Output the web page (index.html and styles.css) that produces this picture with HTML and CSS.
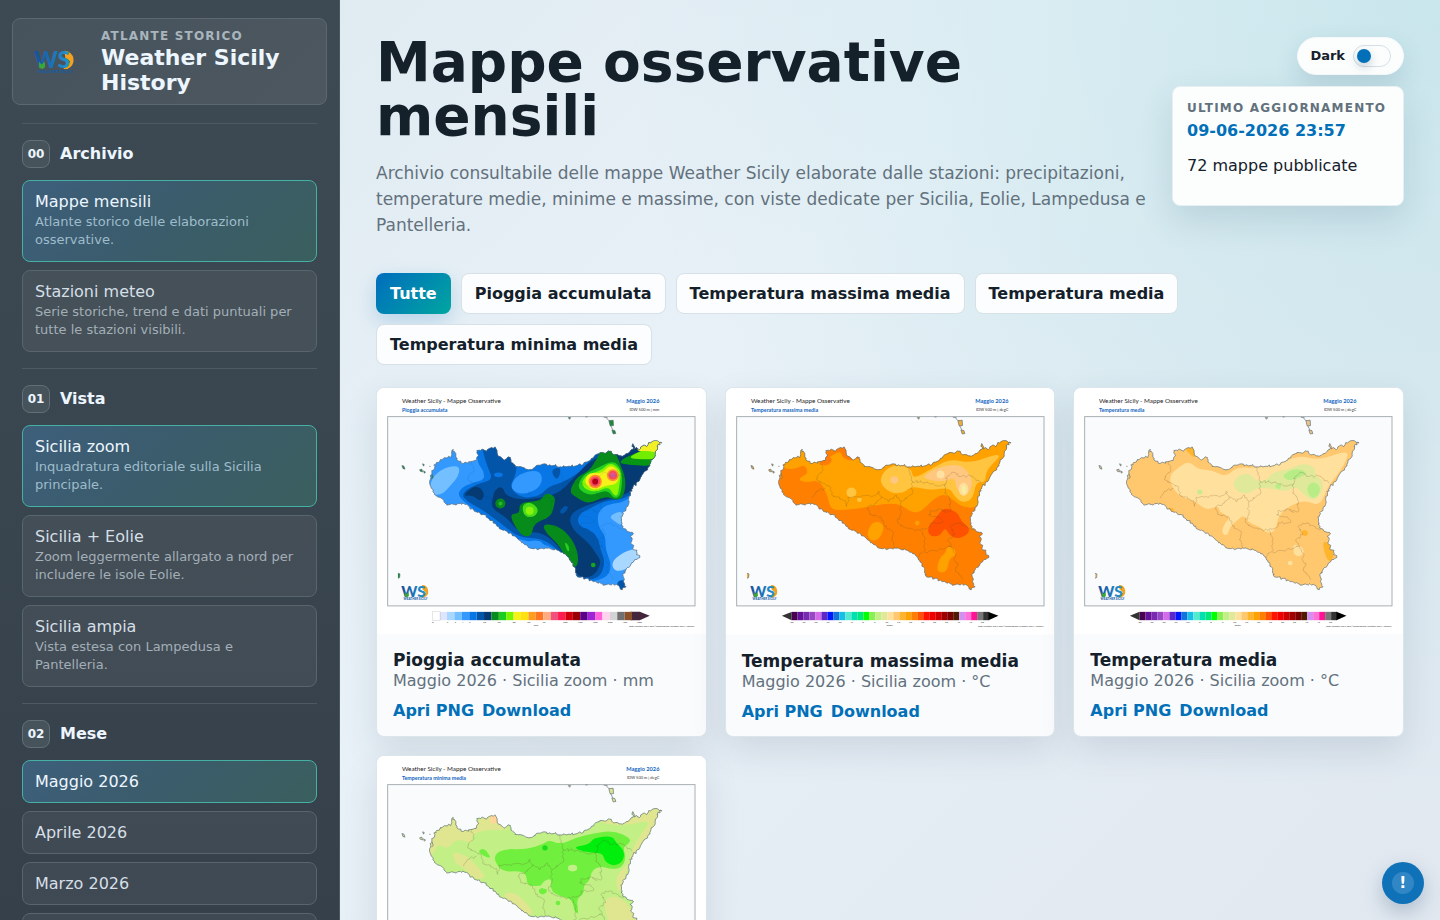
FILE: index.html
```
<!DOCTYPE html>
<html lang="it">
<head>
    <meta charset="UTF-8">
    <meta name="viewport" content="width=device-width, initial-scale=1.0">
    <title>Mappe osservative mensili | Weather Sicily History</title>
    <link rel="stylesheet" href="styles.css">
</head>
<body>
    <!-- Forme condivise dalle mappe -->
    <svg class="shared-defs" width="0" height="0" aria-hidden="true">
        <defs>
            <linearGradient id="ws-blue" x1="0" y1="0" x2="1" y2="0">
                <stop offset="0" stop-color="#164f9c"/>
                <stop offset="1" stop-color="#2196d3"/>
            </linearGradient>
            <path id="coast" d="M232 208 L240 225 L243 240 L262 251 L285 245 L302 237 L307 225 L303 212 L318 208 L332 214 L343 205 L357 201 L364 212 L368 229 L385 241 L397 231 L404 236 L406 247 L425 260 L450 268 L478 264 L500 253 L520 256 L540 254 L555 261 L580 259 L605 257 L625 249 L645 241 L660 225 L680 218 L702 214 L716 225 L740 229 L760 219 L773 208 L772 191 L776 207 L795 206 L818 194 L836 182 L848 184 L860 189 L848 193 L846 208 L835 235 L820 260 L800 285 L782 310 L768 328 L760 350 L757 380 L742 398 L738 425 L741 445 L755 455 L765 458 L774 463 L764 470 L770 480 L765 490 L775 497 L772 508 L785 512 L783 525 L793 534 L778 540 L768 550 L752 568 L743 590 L744 605 L752 622 L740 631 L730 618 L712 612 L690 616 L668 611 L640 600 L606 592 L600 572 L592 552 L575 530 L550 513 L520 505 L490 508 L465 506 L447 495 L428 480 L405 460 L378 450 L352 430 L325 405 L300 396 L285 388 L272 374 L245 372 L213 376 L200 358 L178 346 L166 325 L163 300 L168 275 L180 250 L200 238 L226 228 Z"/>
            <clipPath id="land"><use href="#coast"/></clipPath>
            <path id="provinces" d="M288 245 L295 270 L280 285 L275 300 L300 312 L318 325 L320 345 L345 358 L362 362 L366 380 L370 352 L395 352 L420 348 L440 352 L460 335 L470 352 L490 365 L515 345 L530 365 L560 345 L562 310 L557 280 L545 258 M302 325 L275 335 L263 355 M530 365 L525 410 L520 430 L545 445 L585 452 L610 445 L625 430 L655 425 L645 412 L612 405 L620 392 L650 390 L665 400 M470 352 L455 370 L430 380 L435 405 L470 415 L480 440 L505 455 L500 480 L508 505 M562 305 L600 308 L640 318 L662 312 L668 290 L690 278 L710 290 L745 290 L770 310 M662 312 L660 340 L675 360 L678 395 L650 390 M590 452 L600 480 L600 515 L578 535 M600 520 L650 508 L680 500 L670 480 L690 465 L676 440 L700 430 L725 440 L745 450 M680 500 L695 525 L688 540 L700 555 L695 575 L715 600"/>
            <path id="islands" d="M78 257 L84 259 L87 268 L81 266 Z M140 252 L145 254 L143 259 Z M131 270 L138 268 L140 276 L134 275 Z M143 273 L149 277 L145 280 Z M160 259 L164 260 M168 282 L172 292 L167 298 M578 113 L585 113 L582 118 Z M630 111 L636 111 M685 112 L696 113 M693 114 L700 122 M700 122 L713 121 L714 137 L704 138 Z M706 138 L712 150 M709 150 L718 152 L721 161 L713 162 Z M66 581 L72 583 L71 594 L66 596"/>
            <g id="ws-logo">
                <path d="M138 616 A19 19 0 0 1 144 653 L136 653 L150 638 L140 630 Z" fill="#f5a01f"/>
                <text class="ws-letters" x="76" y="651" fill="url(#ws-blue)">WS</text>
                <path d="M86 638 L92 644 L98 637 L99 649 L94 653 L87 651 Z" fill="#39a935"/>
                <text class="ws-name" x="83" y="661">WEATHER SICILY</text>
            </g>
            <g id="sheet">
                <rect x="3" y="24" width="988" height="741" fill="#fff"/>
                <rect x="35" y="110" width="924" height="569" fill="#fafbfd" stroke="#a8b0b4" stroke-width="3"/>
                <text class="map-head" x="78" y="68">Weather Sicily - Mappe Osservative</text>
                <text class="map-month" x="852" y="68">Maggio 2026</text>
                <text class="map-source" x="957" y="741">Dati: Weather Sicily IDW | Elaborazione: Weather Sicily Network</text>
                <use href="#ws-logo"/>
            </g>
            <g id="temp-ticks" class="ticks">
                <text x="200" y="731">-30</text><text x="236" y="731">-25</text><text x="272" y="731">-20</text><text x="308" y="731">-15</text><text x="344" y="731">-10</text><text x="380" y="731">-5</text><text x="415" y="731">0</text><text x="450" y="731">5</text><text x="486" y="731">10</text><text x="522" y="731">15</text><text x="558" y="731">20</text><text x="594" y="731">25</text><text x="630" y="731">30</text><text x="666" y="731">35</text><text x="702" y="731">40</text><text x="738" y="731">45</text><text x="774" y="731">50</text><text x="495" y="740">degC</text>
            </g>
        </defs>
    </svg>

    <div class="app">
        <aside class="sidebar">
            <div class="brand">
                <svg class="brand-logo" viewBox="66 600 106 76" role="img" aria-label="Weather Sicily"><use href="#ws-logo"/></svg>
                <div>
                    <span class="eyebrow">Atlante storico</span>
                    <strong class="brand-name">Weather Sicily History</strong>
                </div>
            </div>

            <section class="side-section">
                <h2><span class="step">00</span>Archivio</h2>
                <nav class="side-list">
                    <a class="side-item active" href="#mappe">Mappe mensili<small>Atlante storico delle elaborazioni osservative.</small></a>
                    <a class="side-item" href="#stazioni">Stazioni meteo<small>Serie storiche, trend e dati puntuali per tutte le stazioni visibili.</small></a>
                </nav>
            </section>

            <section class="side-section">
                <h2><span class="step">01</span>Vista</h2>
                <div class="side-list">
                    <button class="side-item active" type="button">Sicilia zoom<small>Inquadratura editoriale sulla Sicilia principale.</small></button>
                    <button class="side-item" type="button">Sicilia + Eolie<small>Zoom leggermente allargato a nord per includere le isole Eolie.</small></button>
                    <button class="side-item" type="button">Sicilia ampia<small>Vista estesa con Lampedusa e Pantelleria.</small></button>
                </div>
            </section>

            <section class="side-section">
                <h2><span class="step">02</span>Mese</h2>
                <div class="side-list">
                    <button class="side-item active" type="button">Maggio 2026</button>
                    <button class="side-item" type="button">Aprile 2026</button>
                    <button class="side-item" type="button">Marzo 2026</button>
                    <button class="side-item" type="button">Febbraio 2026</button>
                </div>
            </section>
        </aside>

        <main class="content" id="mappe">
            <header class="page-header">
                <div>
                    <h1>Mappe osservative mensili</h1>
                    <p class="intro">Archivio consultabile delle mappe Weather Sicily elaborate dalle stazioni: precipitazioni, temperature medie, minime e massime, con viste dedicate per Sicilia, Eolie, Lampedusa e Pantelleria.</p>
                </div>
                <div class="header-side">
                    <label class="theme-toggle" for="theme">Dark
                        <input type="checkbox" id="theme">
                    </label>
                    <div class="status">
                        <span class="eyebrow">Ultimo aggiornamento</span>
                        <strong>09-06-2026 23:57</strong>
                        <p>72 mappe pubblicate</p>
                    </div>
                </div>
            </header>

            <div class="filters">
                <button class="active" type="button">Tutte</button>
                <button type="button">Pioggia accumulata</button>
                <button type="button">Temperatura massima media</button>
                <button type="button">Temperatura media</button>
                <button type="button">Temperatura minima media</button>
            </div>

            <div class="map-grid">
                <!-- Pioggia accumulata -->
                <article class="map-card">
                    <svg class="map" viewBox="3 24 988 741" role="img" aria-label="Pioggia accumulata, Maggio 2026">
                        <use href="#sheet"/>
                        <text class="map-kind" x="78" y="97">Pioggia accumulata</text>
                        <text class="map-unit" x="852" y="93">IDW 500 m | mm</text>
                        <g class="zones" clip-path="url(#land)">
                            <rect x="150" y="170" width="720" height="470" fill="#3399ff"/>
                            <path d="M165 300 L190 272 L225 258 L252 260 L248 290 L225 315 L200 345 L160 345 Z" fill="#73bfff"/>
                            <path d="M300 190 L410 220 L520 245 L670 215 L880 170 L860 260 L760 365 L690 375 L666 400 L668 440 L690 470 L690 510 L710 560 L690 600 L600 610 L560 520 L500 490 L450 485 L400 470 L350 440 L290 385 L245 350 L255 325 L290 308 L325 300 L325 275 L305 250 Z" fill="#0877e5"/>
                            <path d="M315 180 L410 220 L425 260 L416 295 L402 320 L432 355 L490 350 L520 320 L555 310 L610 280 L640 245 L670 215 L880 170 L860 260 L758 358 L690 362 L645 385 L605 405 L620 440 L665 465 L675 510 L690 550 L670 600 L600 600 L560 520 L500 475 L430 475 L375 430 L320 390 L262 358 L262 335 L310 310 L352 300 L335 260 L325 230 Z" fill="#0355aa"/>
                            <path d="M357 330 L380 318 L390 350 L450 362 L545 345 L590 300 L660 225 L880 170 L860 260 L758 345 L680 362 L610 385 L580 410 L590 450 L640 490 L660 520 L680 550 L650 595 L600 590 L560 510 L500 455 L430 460 L395 415 L345 385 L352 350 Z M260 350 L300 313 L328 340 L315 368 L290 345 Z" fill="#053a73"/>
                            <path d="M412 300 L440 278 L490 270 L502 300 L485 330 L440 345 L405 330 Z" fill="#3399ff"/>
                            <path d="M525 270 L555 260 L552 290 L540 300 Z" fill="#0355aa"/>
                            <ellipse cx="368" cy="285" rx="13" ry="7" fill="#0877e5"/>
                            <path d="M550 395 L570 375 L580 385 L560 405 Z" fill="#0355aa"/>
                            <path d="M603 410 L650 395 L672 425 L640 450 L612 440 Z" fill="#0877e5"/>
                            <path d="M450 488 L480 480 L505 490 L495 515 L450 510 Z" fill="#3399ff"/>
                            <path d="M700 408 L745 390 L745 440 L715 425 Z" fill="#73bfff"/>
                            <path d="M705 545 L760 508 L810 510 L775 560 L720 580 Z" fill="#a8d7ff"/>
                            <path d="M580 335 L605 290 L640 275 L665 235 L680 205 L715 205 L735 255 L752 300 L745 352 L720 362 L690 348 L640 374 L600 352 Z" fill="#078c1b"/>
                            <path d="M603 325 L622 285 L665 265 L715 240 L742 275 L736 350 L715 357 L695 328 L645 350 Z" fill="#26cf20"/>
                            <path d="M614 318 L632 283 L675 274 L705 246 L738 272 L732 312 L727 350 L712 345 L700 320 L655 340 Z" fill="#8df500"/>
                            <path d="M624 308 L640 278 L680 282 L705 252 L735 280 L723 315 L690 316 L655 335 Z" fill="#f6f01b"/>
                            <circle cx="659" cy="305" r="20" fill="#ff8b28"/>
                            <circle cx="659" cy="305" r="15" fill="#ff4a62"/>
                            <circle cx="659" cy="305" r="9" fill="#ba0018"/>
                            <circle cx="712" cy="286" r="18" fill="#ff952c"/>
                            <circle cx="712" cy="286" r="13" fill="#f44e5a"/>
                            <circle cx="712" cy="286" r="7" fill="#d957a0"/>
                            <path d="M725 248 L775 220 L880 190 L850 260 L760 256 Z" fill="#079515"/>
                            <path d="M755 235 L800 210 L860 190 L845 238 L800 238 Z" fill="#72ec00"/>
                            <path d="M775 215 L820 165 L890 175 L855 222 L820 212 Z" fill="#f3ef25"/>
                            <circle cx="374" cy="371" r="15" fill="#078c1b"/>
                            <circle cx="374" cy="371" r="6" fill="#2cb52a"/>
                            <path d="M404 402 L432 402 L430 368 L495 364 L510 338 L540 350 L535 380 L525 412 L475 430 L467 470 L440 470 L412 430 Z" fill="#078c1b"/>
                            <path d="M438 375 L465 366 L490 388 L478 412 L446 412 Z" fill="#48dd19"/>
                            <circle cx="462" cy="393" r="12" fill="#8af20c"/>
                            <path d="M498 432 L550 438 L592 480 L610 530 L602 570 L575 540 L545 490 L515 465 Z" fill="#078c1b"/>
                            <path d="M566 485 L582 500 L580 518 L572 508 Z" fill="#26cf20"/>
                            <circle cx="653" cy="556" r="7" fill="#16a51d"/>
                            <path d="M725 600 L765 605 L755 645 L725 635 Z" fill="#0355aa"/>
                        </g>
                        <use href="#provinces" class="provinces faint"/>
                        <use href="#coast" class="coast"/>
                        <use href="#islands" class="coast" fill="#168b38"/>
                        <path d="M765 697 H793 L823 709 L793 722 H765 Z" fill="#43253c"/>
                        <g class="scale" data-x="169" data-step="22.25" data-colors="#ffffff,#dfe5ff,#a8d7ff,#73bfff,#3399ff,#0877e5,#0355aa,#053a73,#078c1b,#1ecb20,#7af500,#f6f01b,#ffe010,#ff9d20,#ff7524,#ffab80,#f0527c,#ff1d50,#d1000d,#990006,#5c008a,#9c24d4,#ff61d8,#ffd3ee,#d3d3d3,#707070,#8c5028"></g>
                        <rect x="169" y="697" width="24" height="25" fill="none" stroke="#b5b5b5"/>
                        <g class="ticks"><text x="171" y="731">0</text><text x="215" y="731">1</text><text x="238" y="731">2</text><text x="260" y="731">4</text><text x="282" y="731">6</text><text x="326" y="731">10</text><text x="370" y="731">20</text><text x="415" y="731">30</text><text x="459" y="731">50</text><text x="505" y="731">75</text><text x="569" y="731">100</text><text x="614" y="731">150</text><text x="659" y="731">200</text><text x="704" y="731">300</text><text x="748" y="731">400</text><text x="792" y="731">500</text><text x="481" y="740">mm</text></g>
                    </svg>
                    <div class="map-body">
                        <h3>Pioggia accumulata</h3>
                        <p>Maggio 2026 · Sicilia zoom · mm</p>
                        <div class="map-links"><a href="#">Apri PNG</a><a href="#">Download</a></div>
                    </div>
                </article>

                <!-- Temperatura massima media -->
                <article class="map-card">
                    <svg class="map" viewBox="3 24 988 741" role="img" aria-label="Temperatura massima media, Maggio 2026">
                        <use href="#sheet"/>
                        <text class="map-kind" x="78" y="97">Temperatura massima media</text>
                        <text class="map-unit" x="852" y="93">IDW 500 m | degC</text>
                        <g class="zones" clip-path="url(#land)">
                            <rect x="150" y="170" width="720" height="470" fill="#ff8000"/>
                            <path d="M160 262 L235 190 L255 240 L290 245 L310 235 L350 210 L390 245 L640 235 L890 150 L820 290 L765 350 L758 385 L715 382 L685 360 L660 342 L630 355 L610 375 L585 398 L560 398 L530 375 L490 370 L430 382 L370 390 L318 392 L310 350 L285 300 L245 308 L220 300 L235 288 L250 280 L240 252 L210 270 Z" fill="#ffa200"/>
                            <path d="M280 255 L305 220 L325 240 L310 258 Z M340 205 L350 185 L378 210 L395 243 L358 240 Z" fill="#ff7c08"/>
                            <path d="M462 308 L480 270 L520 252 L562 268 L565 300 L640 255 L680 238 L740 250 L815 222 L828 230 L785 270 L782 310 L755 305 L745 358 L715 370 L690 352 L675 322 L620 332 L560 318 L540 338 L500 342 Z" fill="#ffc440"/>
                            <path d="M590 292 L640 262 L705 252 L738 285 L745 320 L722 353 L696 330 L690 292 L660 306 L620 302 Z M492 300 L510 284 L526 302 L508 316 Z" fill="#ffc780"/>
                            <circle cx="648" cy="284" r="12" fill="#ffe0a0"/>
                            <ellipse cx="717" cy="328" rx="14" ry="20" fill="#ffdd9a"/>
                            <ellipse cx="718" cy="329" rx="6" ry="13" fill="#f5f0a0"/>
                            <circle cx="380" cy="338" r="15" fill="#ffc440"/>
                            <circle cx="404" cy="360" r="7" fill="#ffc440"/>
                            <path d="M425 470 L438 432 L460 424 L480 438 L467 475 L445 486 Z M636 565 L648 530 L665 520 L666 498 L692 508 L694 528 L675 535 L667 575 L645 580 Z" fill="#ffa200"/>
                            <circle cx="578" cy="430" r="7" fill="#ffa200"/>
                            <path d="M608 445 L635 412 L660 382 L700 398 L710 425 L736 445 L730 464 L700 478 L675 468 L662 442 L645 470 L615 470 Z" fill="#ff5200"/>
                        </g>
                        <use href="#provinces" class="provinces"/>
                        <use href="#coast" class="coast"/>
                        <use href="#islands" class="coast" fill="#f2ab33"/>
                        <g class="scale" data-x="200" data-step="18" data-palette="temp"></g>
                        <path d="M200 697 L171 709 L200 722 Z" fill="#333"/>
                        <path d="M792 697 L822 709 L792 722 Z" fill="#000"/>
                        <use href="#temp-ticks"/>
                    </svg>
                    <div class="map-body">
                        <h3>Temperatura massima media</h3>
                        <p>Maggio 2026 · Sicilia zoom · °C</p>
                        <div class="map-links"><a href="#">Apri PNG</a><a href="#">Download</a></div>
                    </div>
                </article>

                <!-- Temperatura media -->
                <article class="map-card">
                    <svg class="map" viewBox="3 24 988 741" role="img" aria-label="Temperatura media, Maggio 2026">
                        <use href="#sheet"/>
                        <text class="map-kind" x="78" y="97">Temperatura media</text>
                        <text class="map-unit" x="852" y="93">IDW 500 m | degC</text>
                        <g class="zones" clip-path="url(#land)">
                            <rect x="150" y="170" width="720" height="470" fill="#ffc76e"/>
                            <path d="M286 290 L320 260 L350 244 L375 268 L420 272 L460 292 L490 262 L560 265 L640 245 L680 226 L740 242 L815 214 L830 225 L800 280 L772 310 L755 350 L738 378 L700 362 L665 372 L620 400 L608 455 L585 462 L560 440 L530 430 L515 405 L490 425 L472 440 L464 470 L446 460 L455 430 L475 412 L440 398 L438 378 L400 392 L370 365 L335 355 L305 335 Z" fill="#ffe09c"/>
                            <path d="M478 312 L500 285 L530 280 L550 305 L585 300 L600 278 L650 268 L690 250 L730 262 L725 285 L755 305 L745 345 L720 364 L690 342 L670 318 L640 337 L590 325 L550 325 L530 342 L495 338 Z" fill="#dfe999"/>
                            <path d="M628 290 L650 272 L680 266 L706 280 L680 294 L650 303 Z M700 325 L720 303 L745 320 L738 348 L716 357 Z M602 318 L628 308 L622 332 Z" fill="#b7ec87"/>
                            <circle cx="381" cy="337" r="8" fill="#cce98f"/>
                            <path d="M338 210 L350 190 L372 208 L368 236 L350 222 Z M688 450 L708 454 L704 470 L688 467 Z M750 480 L778 498 L785 530 L770 550 L755 520 Z M281 382 L305 386 L300 402 Z" fill="#ffb52b"/>
                            <circle cx="678" cy="515" r="15" fill="#ffe09c"/>
                            <circle cx="670" cy="503" r="8" fill="#ffe09c"/>
                            <circle cx="653" cy="550" r="7" fill="#ffe09c"/>
                        </g>
                        <use href="#provinces" class="provinces"/>
                        <use href="#coast" class="coast"/>
                        <use href="#islands" class="coast" fill="#eac68a"/>
                        <g class="scale" data-x="200" data-step="18" data-palette="temp"></g>
                        <path d="M200 697 L171 709 L200 722 Z" fill="#333"/>
                        <path d="M792 697 L822 709 L792 722 Z" fill="#000"/>
                        <use href="#temp-ticks"/>
                    </svg>
                    <div class="map-body">
                        <h3>Temperatura media</h3>
                        <p>Maggio 2026 · Sicilia zoom · °C</p>
                        <div class="map-links"><a href="#">Apri PNG</a><a href="#">Download</a></div>
                    </div>
                </article>

                <!-- Temperatura minima media -->
                <article class="map-card">
                    <svg class="map" viewBox="3 24 988 741" role="img" aria-label="Temperatura minima media, Maggio 2026">
                        <use href="#sheet"/>
                        <text class="map-kind" x="78" y="97">Temperatura minima media</text>
                        <text class="map-unit" x="852" y="93">IDW 500 m | degC</text>
                        <g class="zones" clip-path="url(#land)">
                            <rect x="150" y="170" width="720" height="470" fill="#c2ef86"/>
                            <path d="M150 300 L180 240 L235 190 L245 240 L300 225 L350 190 L380 230 L405 247 L330 245 L285 262 L295 288 L240 272 L215 305 L185 285 L160 345 Z M230 310 L270 322 L300 350 L335 392 L290 395 L265 360 L235 345 Z M650 222 L750 235 L830 215 L795 260 L770 305 L760 345 L745 405 L730 440 L718 390 L755 350 L800 285 L880 180 L840 175 L770 205 Z M685 450 L740 445 L800 530 L740 610 L720 580 L690 500 Z M375 440 L415 432 L450 462 L480 505 L420 490 Z" fill="#e0e690"/>
                            <path d="M340 214 L352 196 L370 212 L364 228 L345 226 Z" fill="#ffd59a"/>
                            <path d="M350 328 L380 303 L450 305 L500 290 L520 276 L555 290 L600 270 L660 255 L715 248 L768 272 L758 290 L742 298 L752 330 L738 362 L700 364 L680 355 L650 365 L642 400 L625 410 L624 440 L602 455 L610 500 L596 492 L590 455 L555 445 L528 432 L525 405 L490 415 L454 414 L452 378 L430 370 L378 372 Z M305 310 L325 300 L348 332 L325 326 Z M486 425 L510 416 L516 435 L495 442 Z" fill="#70ef3e"/>
                            <path d="M596 297 L640 290 L655 270 L710 264 L722 285 L748 310 L742 342 L715 356 L688 342 L682 316 L640 314 L608 306 Z" fill="#00ee0c"/>
                            <circle cx="508" cy="300" r="8" fill="#18de1c"/>
                            <ellipse cx="591" cy="361" rx="14" ry="10" fill="#c2ef86"/>
                            <path d="M494 412 L515 392 L530 398 L522 424 L500 424 Z" fill="#c2ef86"/>
                            <circle cx="547" cy="466" r="7" fill="#70ef3e"/>
                        </g>
                        <use href="#provinces" class="provinces"/>
                        <use href="#coast" class="coast"/>
                        <use href="#islands" class="coast" fill="#dce490"/>
                        <g class="scale" data-x="200" data-step="18" data-palette="temp"></g>
                    </svg>
                    <div class="map-body">
                        <h3>Temperatura minima media</h3>
                        <p>Maggio 2026 · Sicilia zoom · °C</p>
                        <div class="map-links"><a href="#">Apri PNG</a><a href="#">Download</a></div>
                    </div>
                </article>
            </div>
        </main>
    </div>

    <button class="report" type="button" aria-label="Segnala un problema"><span>!</span></button>

    <script>
        const tempColors = '#4a0052,#65129a,#782bb0,#9848c4,#d46be8,#5e28c8,#0018ff,#1274da,#17bfe8,#55e9cf,#00e0b0,#00e77d,#00ff00,#8af052,#c2ef86,#dfe999,#ffe09c,#ffc76e,#ffb52b,#ffa200,#ff8000,#ff5200,#ff1200,#f00000,#d00000,#a00000,#7d0000,#4d1b00,#d291f0,#ff70d8,#ff1493,#777777,#333333';

        // Divide un tracciato in liste di punti [x, y]
        function readRings(path) {
            return path.getAttribute('d').split('M').filter(part => part.trim()).map(part => {
                const nums = part.match(/-?\d+/g).map(Number);
                const points = [];
                for (let i = 0; i < nums.length; i += 2) {
                    points.push([nums[i], nums[i + 1]]);
                }
                return { points, closed: part.includes('Z') };
            });
        }

        // Contorni morbidi per le fasce di valore
        document.querySelectorAll('.zones path').forEach(path => {
            const d = readRings(path).map(({ points }) => {
                const mid = (a, b) => [(a[0] + b[0]) / 2, (a[1] + b[1]) / 2];
                const n = points.length;
                let out = 'M' + mid(points[n - 1], points[0]);
                points.forEach((p, i) => {
                    out += ' Q' + p + ' ' + mid(p, points[(i + 1) % n]);
                });
                return out + 'Z';
            });
            path.setAttribute('d', d.join(' '));
        });

        // Linee frastagliate per coste e confini
        function roughen(id, size) {
            const path = document.getElementById(id);
            let seed = 7;
            const noise = () => {
                seed = (seed * 16807) % 2147483647;
                return (seed / 2147483647 - 0.5) * size;
            };
            const d = readRings(path).map(({ points, closed }) => {
                const out = [];
                points.forEach((p, i) => {
                    out.push(p);
                    const next = points[i + 1] || (closed ? points[0] : null);
                    if (!next) return;
                    const steps = Math.round(Math.hypot(next[0] - p[0], next[1] - p[1]) / 5);
                    for (let s = 1; s < steps; s++) {
                        out.push([
                            Math.round(p[0] + (next[0] - p[0]) * s / steps + noise()),
                            Math.round(p[1] + (next[1] - p[1]) * s / steps + noise())
                        ]);
                    }
                });
                return 'M' + out.join(' L') + (closed ? 'Z' : '');
            });
            path.setAttribute('d', d.join(' '));
        }

        roughen('coast', 7);
        roughen('provinces', 8);

        // Disegna le scale dei colori sotto le mappe
        document.querySelectorAll('.scale').forEach(scale => {
            const colors = (scale.dataset.palette === 'temp' ? tempColors : scale.dataset.colors).split(',');
            const step = Number(scale.dataset.step);
            colors.forEach((color, i) => {
                const rect = document.createElementNS('http://www.w3.org/2000/svg', 'rect');
                rect.setAttribute('x', Number(scale.dataset.x) + i * step);
                rect.setAttribute('y', 697);
                rect.setAttribute('width', step);
                rect.setAttribute('height', 25);
                rect.setAttribute('fill', color);
                scale.appendChild(rect);
            });
        });
    </script>
</body>
</html>
```
FILE: styles.css
```
* {
    box-sizing: border-box;
}

html {
    scrollbar-width: none;
}

body {
    margin: 0;
    font-family: "DejaVu Sans", sans-serif;
    font-size: 16px;
    line-height: 20px;
    color: #14202a;
    background:
        radial-gradient(circle at 100% 0, rgba(0, 175, 175, 0.13), transparent 48%),
        linear-gradient(135deg, #dce8ef 0%, #e8f1f7 45%, #e1e8f0 100%);
    background-attachment: fixed;
}

button,
input {
    font: inherit;
}

button {
    cursor: pointer;
}

a {
    text-decoration: none;
}

.shared-defs {
    position: absolute;
}

.app {
    display: grid;
    grid-template-columns: 340px 1fr;
}

/* Barra laterale */
.sidebar {
    position: sticky;
    top: 0;
    height: 100vh;
    overflow-y: auto;
    scrollbar-width: none;
    padding: 18px 12px;
    border-right: 1px solid #4c5860;
    background: linear-gradient(180deg, #3e4a53 0%, #3a464f 50%, #35404a 100%);
}

.brand {
    display: grid;
    grid-template-columns: 60px 1fr;
    align-items: center;
    gap: 16px;
    padding: 9px 12px;
    border: 1px solid #5b6870;
    border-radius: 8px;
    background: linear-gradient(135deg, #46535c, #4d5760);
}

.brand-logo {
    width: 52px;
    margin-left: 4px;
}

.eyebrow {
    display: block;
    font-size: 12px;
    line-height: 17px;
    font-weight: 700;
    letter-spacing: 0.1em;
    text-transform: uppercase;
    color: #63717d;
}

.brand .eyebrow {
    color: #a9b5bd;
}

.brand-name {
    display: block;
    font-size: 22px;
    line-height: 25px;
    color: #edf6ff;
}

.side-section {
    margin: 16px 10px 0;
    padding-top: 16px;
    border-top: 1px solid #4e5a63;
}

.brand + .side-section {
    margin-top: 18px;
}

.side-section h2 {
    display: flex;
    align-items: center;
    gap: 10px;
    margin: 0 0 12px;
    font-size: 16px;
    color: #edf6ff;
}

.step {
    display: grid;
    place-items: center;
    width: 28px;
    height: 28px;
    border: 1px solid #626f77;
    border-radius: 8px;
    background: #47535b;
    font-size: 12px;
}

.side-list {
    display: grid;
    gap: 8px;
}

.side-item {
    display: block;
    width: 100%;
    padding: 10px 12px;
    border: 1px solid #58656d;
    border-radius: 8px;
    background: rgba(255, 255, 255, 0.05);
    color: #d5dfe7;
    line-height: 21px;
    text-align: left;
}

.side-item.active {
    border-color: #45b0a4;
    background: linear-gradient(135deg, #3d5f7b, #3b5c6c 45%, #3a5f5e);
    color: #edf6ff;
}

.side-item small {
    display: block;
    margin: 1px 0 2px;
    font-size: 13px;
    line-height: 18px;
    color: #a3afb7;
}

.side-item.active small {
    color: #9fbccb;
}

/* Contenuto */
.content {
    min-width: 0;
    padding: 35px 36px;
}

.page-header {
    display: grid;
    grid-template-columns: 1fr auto;
    gap: 24px;
    margin-bottom: 35px;
}

h1 {
    margin: 0 0 17px;
    font-size: 55px;
    line-height: 54px;
}

.intro {
    max-width: 780px;
    margin: 0;
    font-size: 17px;
    line-height: 26px;
    color: #63717d;
}

.header-side {
    display: flex;
    flex-direction: column;
    align-items: flex-end;
    gap: 11px;
    padding-top: 2px;
}

.theme-toggle {
    display: flex;
    align-items: center;
    gap: 8px;
    padding: 7px 12px;
    border: 1px solid #f4f8fa;
    border-radius: 20px;
    background: #fcfefe;
    box-shadow: 0 10px 24px rgba(30, 70, 100, 0.14);
    font-size: 13px;
    font-weight: 700;
    cursor: pointer;
}

.theme-toggle input {
    appearance: none;
    display: flex;
    align-items: center;
    width: 38px;
    height: 22px;
    margin: 0;
    padding: 0 3px;
    border: 1px solid #d7dfe6;
    border-radius: 11px;
    background: #fcfefe;
}

.theme-toggle input::before {
    content: "";
    width: 14px;
    height: 14px;
    border-radius: 50%;
    background: #0270b8;
    box-shadow: 0 4px 10px rgba(20, 50, 80, 0.25);
}

.theme-toggle input:checked {
    justify-content: flex-end;
}

.status {
    min-width: 232px;
    min-height: 120px;
    padding: 13px 14px;
    border: 1px solid #e6eff2;
    border-radius: 8px;
    background: #fcfefe;
    box-shadow: 0 14px 34px rgba(30, 70, 100, 0.14);
}

.status strong {
    display: block;
    margin: 4px 0 15px;
    color: #0270b8;
}

.status p {
    margin: 0;
}

.filters {
    display: flex;
    flex-wrap: wrap;
    gap: 10px;
    margin-bottom: 22px;
}

.filters button {
    padding: 10px 13px;
    border: 1px solid #d7e1e7;
    border-radius: 8px;
    background: #fbfdfe;
    color: #14202a;
    font-weight: 700;
    line-height: 19px;
}

.filters button.active {
    border-color: transparent;
    background: linear-gradient(135deg, #006dbe, #00a6a0) border-box;
    box-shadow: 0 8px 20px rgba(0, 110, 190, 0.2);
    color: #fff;
}

.map-grid {
    display: grid;
    grid-template-columns: repeat(3, minmax(0, 1fr));
    gap: 18px;
}

.map-card {
    overflow: hidden;
    border: 1px solid #dbe5ea;
    border-radius: 8px;
    background: #f9fbfd;
    box-shadow: 0 14px 34px rgba(30, 60, 90, 0.12);
}

.map {
    display: block;
    width: 100%;
    height: auto;
}

.map-body {
    padding: 16px 16px 14px;
}

.map-body h3 {
    margin: 0;
    font-size: 17px;
    line-height: 21px;
}

.map-body p {
    margin: 0 0 10px;
    color: #63717d;
}

.map-links {
    display: flex;
    gap: 8px;
}

.map-links a {
    color: #0270b8;
    font-weight: 700;
}

/* Testi e linee dentro le mappe */
.map text,
.shared-defs text {
    font-family: Lato, sans-serif;
}

.map-head {
    font-size: 19px;
    fill: #252525;
}

.map-month,
.map-kind {
    font-size: 17px;
    font-weight: 700;
    fill: #1465c0;
}

.map-kind {
    font-size: 16px;
}

.map-unit {
    font-size: 12px;
    fill: #333;
}

.map-month,
.map-unit,
.map-source {
    text-anchor: end;
}

.map-source {
    font-size: 7px;
    fill: #333;
}

.ticks {
    font-size: 8px;
    text-anchor: middle;
    fill: #333;
}

.ws-letters {
    font-size: 46px;
    font-weight: 900;
}

.ws-name {
    font-size: 9px;
    font-weight: 900;
    fill: #175ca4;
}

.coast {
    stroke: #5d6c74;
    stroke-width: 2;
}

#coast {
    fill: none;
}

.provinces {
    fill: none;
    stroke: #5b4a32;
    stroke-opacity: 0.6;
    stroke-width: 1;
}

.provinces.faint {
    stroke: #123a66;
    stroke-opacity: 0.3;
}

/* Pulsante segnalazioni */
.report {
    position: fixed;
    right: 16px;
    bottom: 16px;
    display: grid;
    place-items: center;
    width: 42px;
    height: 42px;
    padding: 0;
    border: 0;
    border-radius: 50%;
    background: #0f72b9;
    box-shadow: 0 8px 20px rgba(20, 60, 100, 0.25);
}

.report span {
    width: 22px;
    height: 22px;
    border-radius: 50%;
    background: #3187c5;
    color: #fff;
    font-weight: 700;
    line-height: 22px;
}

@media (max-width: 980px) {
    .app,
    .page-header {
        grid-template-columns: 1fr;
    }

    .sidebar {
        position: static;
        height: auto;
    }

    .map-grid {
        grid-template-columns: 1fr;
    }
}
```
